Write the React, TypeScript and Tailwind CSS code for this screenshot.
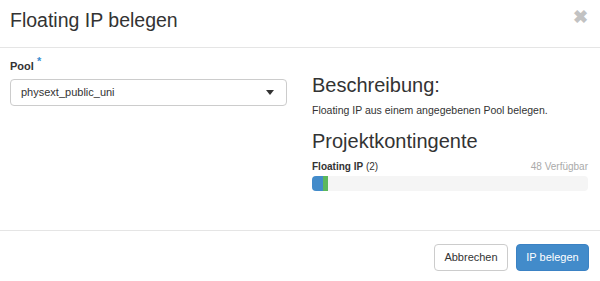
export default function App() {
  return (
    <div className="w-[600px] h-[281px] bg-white text-[#333] font-['Liberation_Sans',Arial,sans-serif] flex flex-col">
      <div className="h-[48px] border-b border-[#e5e5e5] flex items-start justify-between pl-[10px] pr-[12px]">
        <h1 className="mt-[8px] text-[19.5px] leading-[24px] text-[#333]">Floating IP belegen</h1>
        <span className="mt-[8px] text-[#c2c2c2] text-[18px] font-bold leading-[18px]">✖</span>
      </div>

      <div className="h-[183px] flex pl-[10px] pr-[12px] border-b border-[#e5e5e5]">
        <div className="w-[277px] pt-[11px]">
          <label className="block text-[11px] font-bold leading-[14px] text-[#333]">
            Pool <span className="relative -top-[5px] text-[#3b8ed0]">*</span>
          </label>
          <div className="mt-[6px] h-[27px] rounded-[4px] border border-[#ccc] flex items-center justify-between pl-[10px] pr-[12px]">
            <span className="text-[11px] text-[#333]">physext_public_uni</span>
            <svg width="8" height="5" viewBox="0 0 8 5">
              <path d="M0 0h8L4 5z" fill="#333" />
            </svg>
          </div>
        </div>

        <div className="ml-[25px] w-[276px] pt-[26px]">
          <h2 className="text-[20px] leading-[22px] text-[#333]">Beschreibung:</h2>
          <p className="mt-[7px] text-[10.5px] leading-[14px] text-[#333]">
            Floating IP aus einem angegebenen Pool belegen.
          </p>
          <h2 className="mt-[12px] text-[20px] leading-[24px] text-[#333]">Projektkontingente</h2>
          <div className="mt-[7px] flex justify-between text-[10px] leading-[13px]">
            <span>
              <span className="font-bold">Floating IP</span> (2)
            </span>
            <span className="text-[#aaa]">48 Verfügbar</span>
          </div>
          <div className="mt-[3px] h-[15px] rounded-[4px] bg-[#f5f5f5] flex overflow-hidden">
            <div className="w-[11px] bg-[#428bca]" />
            <div className="w-[5px] bg-[#5cb85c]" />
          </div>
        </div>
      </div>

      <div className="flex-1 flex items-start justify-end gap-[8px] pr-[11px] pt-[13px]">
        <button className="h-[27px] w-[74px] rounded-[4px] border border-[#ccc] bg-white text-[11px] text-[#333]">
          Abbrechen
        </button>
        <button className="h-[27px] w-[73px] rounded-[4px] border border-[#3b82c4] bg-[#428bca] text-[11px] text-white">
          IP belegen
        </button>
      </div>
    </div>
  );
}
